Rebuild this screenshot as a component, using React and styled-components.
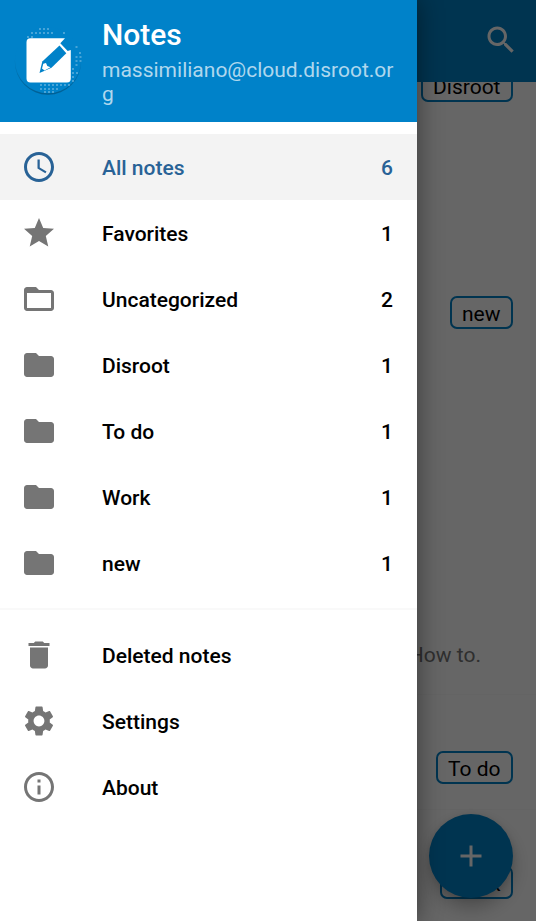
import React from "react";
import styled, { createGlobalStyle } from "styled-components";

const Global = createGlobalStyle`
  * { box-sizing: border-box; }
  body { margin: 0; font-family: Roboto, "Liberation Sans", sans-serif; overflow: hidden; }
`;

const Screen = styled.div`
  position: relative;
  width: 536px;
  height: 921px;
  overflow: hidden;
  background: #fff;
`;

const Page = styled.div`
  display: flex;
  flex-direction: column;
  height: 100%;
`;

const AppBar = styled.header`
  flex: none;
  display: flex;
  align-items: center;
  justify-content: flex-end;
  height: 82px;
  padding: 0 17px 3px 0;
  background: #0082c9;
`;

const NoteList = styled.main`
  flex: 1;
  min-height: 0;
  overflow: hidden;
  display: flex;
  flex-direction: column;
`;

const Note = styled.article`
  flex: none;
  display: flex;
  flex-direction: column;
  justify-content: flex-end;
  align-items: flex-end;
  height: ${(p) => p.$height}px;
  margin-top: ${(p) => p.$offset || 0}px;
  padding: 0 23px 25px;
  border-bottom: 1px solid ${(p) => (p.$plain ? "transparent" : "#f9f9f9")};
`;

const Category = styled.span`
  height: 33px;
  padding: 0 10.5px 0 10px;
  border: 2px solid #0082c9;
  border-radius: 7px;
  font-size: 21px;
  line-height: 32px;
  color: #000;
`;

const Excerpt = styled.p`
  margin: 0 32px 1px 0;
  font-size: 21px;
  line-height: 25px;
  color: #767676;
`;

const Fab = styled.div`
  position: absolute;
  right: 23px;
  bottom: 23px;
  width: 84px;
  height: 84px;
  border-radius: 50%;
  display: flex;
  align-items: center;
  justify-content: center;
  background: #0082c9;
  box-shadow: 0 10px 18px rgba(0, 0, 0, 0.26), 0 1px 6px rgba(0, 0, 0, 0.1);
`;

const Scrim = styled.div`
  position: absolute;
  inset: 0;
  background: rgba(0, 0, 0, 0.6);
`;

const Drawer = styled.nav`
  position: absolute;
  inset: 0 auto 0 0;
  width: 417px;
  background: #fff;
  box-shadow: 0 0 24px rgba(0, 0, 0, 0.45);
`;

const Account = styled.header`
  display: flex;
  height: 122px;
  padding: 18px 20px 0 12px;
  background: #0082c9;
`;

const AccountText = styled.div`
  width: 295px;
  margin-left: 18px;
`;

const Title = styled.h1`
  margin: -1px 0 0;
  font-size: 30px;
  font-weight: 500;
  line-height: 35px;
  color: #fff;
`;

const Email = styled.div`
  margin-top: 6px;
  font-size: 21px;
  line-height: 24px;
  color: rgba(255, 255, 255, 0.7);
  word-break: break-all;
`;

const Menu = styled.ul`
  margin: 0;
  padding: 12px 0;
  list-style: none;
`;

const FooterMenu = styled(Menu)`
  border-top: 2px solid #f9f9f9;
`;

const Item = styled.li`
  display: flex;
  align-items: center;
  height: 66px;
  padding: 0 24px 0 21px;
  background: ${(p) => (p.$active ? "#f3f3f3" : "transparent")};
  color: ${(p) => (p.$active ? "#286296" : "#000")};
  font-size: 21px;
  font-weight: 500;

  svg { color: ${(p) => (p.$active ? "#286296" : "#757575")}; }
`;

const Label = styled.span`
  flex: 1;
  margin-left: 45px;
  padding-top: 2px;
`;

const Count = styled.span`
  padding-top: 2px;
`;

const Glyph = styled.svg`
  flex: none;
  display: block;
  width: 36px;
  height: 36px;
  fill: currentColor;
`;

const LightGlyph = styled(Glyph)`
  color: #fff;
`;

const Logo = styled.svg`
  flex: none;
  width: 72px;
  height: 84px;
`;

const PATHS = {
  clock: "M11.99 2C6.47 2 2 6.48 2 12s4.47 10 9.99 10C17.52 22 22 17.52 22 12S17.52 2 11.99 2zM12 20c-4.42 0-8-3.58-8-8s3.58-8 8-8 8 3.58 8 8-3.58 8-8 8zm.5-13H11v6l5.25 3.15.75-1.23-4.5-2.67z",
  star: "M12 17.27L18.18 21l-1.64-7.03L22 9.24l-7.19-.61L12 2 9.19 8.63 2 9.24l5.46 4.73L5.82 21z",
  folderOpen: "M20 6h-8l-2-2H4c-1.1 0-2 .9-2 2v12c0 1.1.9 2 2 2h16c1.1 0 2-.9 2-2V8c0-1.1-.9-2-2-2zm0 12H4V8h16v10z",
  folder: "M10 4H4c-1.1 0-1.99.9-1.99 2L2 18c0 1.1.9 2 2 2h16c1.1 0 2-.9 2-2V8c0-1.1-.9-2-2-2h-8l-2-2z",
  trash: "M6 19c0 1.1.9 2 2 2h8c1.1 0 2-.9 2-2V7H6v12zM19 4h-3.5l-1-1h-5l-1 1H5v2h14V4z",
  gear: "M19.14 12.94c.04-.3.06-.61.06-.94 0-.32-.02-.64-.07-.94l2.03-1.58c.18-.14.23-.41.12-.61l-1.92-3.32c-.12-.22-.37-.29-.59-.22l-2.39.96c-.5-.38-1.03-.7-1.62-.94l-.36-2.54c-.04-.24-.24-.41-.48-.41h-3.84c-.24 0-.43.17-.47.41l-.36 2.54c-.59.24-1.13.57-1.62.94l-2.39-.96c-.22-.08-.47 0-.59.22L2.74 8.87c-.12.21-.08.47.12.61l2.03 1.58c-.05.3-.09.63-.09.94s.02.64.07.94l-2.03 1.58c-.18.14-.23.41-.12.61l1.92 3.32c.12.22.37.29.59.22l2.39-.96c.5.38 1.03.7 1.62.94l.36 2.54c.05.24.24.41.48.41h3.84c.24 0 .44-.17.47-.41l.36-2.54c.59-.24 1.13-.56 1.62-.94l2.39.96c.22.08.47 0 .59-.22l1.92-3.32c.12-.22.07-.47-.12-.61l-2.01-1.58zM12 15.6c-1.98 0-3.6-1.62-3.6-3.6s1.62-3.6 3.6-3.6 3.6 1.62 3.6 3.6-1.62 3.6-3.6 3.6z",
  info: "M11 17h2v-6h-2v6zm1-15C6.48 2 2 6.48 2 12s4.48 10 10 10 10-4.48 10-10S17.52 2 12 2zm0 18c-4.41 0-8-3.59-8-8s3.59-8 8-8 8 3.59 8 8-3.59 8-8 8zM11 9h2V7h-2v2z",
  search: "M15.5 14h-.79l-.28-.27C15.41 12.59 16 11.11 16 9.5 16 5.91 13.09 3 9.5 3S3 5.91 3 9.5 5.91 16 9.5 16c1.61 0 3.09-.59 4.23-1.57l.27.28v.79l5 4.99L20.49 19l-4.99-5zm-6 0C7.01 14 5 11.99 5 9.5S7.01 5 9.5 5 14 7.01 14 9.5 11.99 14 9.5 14z",
  plus: "M19 13h-6v6h-2v-6H5v-2h6V5h2v6h6v2z",
};

const Icon = ({ name, as: Base = Glyph }) => (
  <Base viewBox="0 0 24 24" aria-hidden="true">
    <path d={PATHS[name]} />
  </Base>
);

// Halftone dots around the logo: [row y, first x, number of dots]
const DOTS = [
  [29, 40, 3], [33, 32, 6], [33, 64, 1], [37, 28, 2],
  [47, 76.5, 1], [53, 80, 1], [57, 76.5, 2], [61, 76.5, 2], [65, 76.5, 1],
  [69, 73, 1], [73, 73, 2], [77, 73, 1], [81, 73, 1],
  [85, 41, 8], [89, 41, 5], [92, 45, 3],
];

const NotesLogo = () => (
  <Logo viewBox="12 18 72 84" aria-label="Notes">
    <defs>
      <linearGradient id="rim" x1="0" y1="0" x2="0" y2="1">
        <stop offset="0.4" stopColor="#00507c" stopOpacity="0" />
        <stop offset="1" stopColor="#00507c" stopOpacity="0.7" />
      </linearGradient>
    </defs>
    <circle cx="48" cy="61.5" r="33.3" fill="url(#rim)" />
    <circle cx="48" cy="60.3" r="33" fill="#0082c9" />
    {DOTS.flatMap(([y, x, n]) =>
      Array.from({ length: n }, (_, i) => (
        <rect key={`${y}-${x}-${i}`} x={x + i * 4 - 1} y={y - 1} width="2" height="2" fill="#fff" opacity="0.28" />
      ))
    )}
    <path fill="#fff" d="M30.500 38.200H65L60.300 43.300 67.700 51 70.800 50V78.500Q70.800 82.500 67 82.500H30.500Q26.500 82.500 26.500 78.500V42.200Q26.500 38.200 30.500 38.200Z" />
    <path fill="#0082c9" d="M39.500 73L42.300 61.500 59.500 45.500 66.300 53.300 51.500 67.800Z" />
    <path fill="#fff" d="M43.300 63.800L46 63 47.300 66 50.500 67.300 44.500 70.400 42 68.500Z" />
  </Logo>
);

const FOLDERS = [
  { icon: "clock", label: "All notes", count: 6, active: true },
  { icon: "star", label: "Favorites", count: 1 },
  { icon: "folderOpen", label: "Uncategorized", count: 2 },
  { icon: "folder", label: "Disroot", count: 1 },
  { icon: "folder", label: "To do", count: 1 },
  { icon: "folder", label: "Work", count: 1 },
  { icon: "folder", label: "new", count: 1 },
];

const ACTIONS = [
  { icon: "trash", label: "Deleted notes" },
  { icon: "gear", label: "Settings" },
  { icon: "info", label: "About" },
];

const MenuItem = ({ icon, label, count, active }) => (
  <Item $active={active}>
    <Icon name={icon} />
    <Label>{label}</Label>
    {count !== undefined && <Count>{count}</Count>}
  </Item>
);

export default function App() {
  return (
    <>
      <Global />
      <Screen>
        <Page>
          <AppBar>
            <Icon name="search" as={LightGlyph} />
          </AppBar>
          <NoteList>
            <Note $height={115} $offset={-69} $plain><Category>Disroot</Category></Note>
            <Note $height={227} $plain><Category>new</Category></Note>
            <Note $height={340}><Excerpt>How to.</Excerpt></Note>
            <Note $height={115}><Category>To do</Category></Note>
            <Note $height={115}><Category>Work</Category></Note>
          </NoteList>
        </Page>
        <Fab><Icon name="plus" as={LightGlyph} /></Fab>
        <Scrim />
        <Drawer>
          <Account>
            <NotesLogo />
            <AccountText>
              <Title>Notes</Title>
              <Email>massimiliano@cloud.disroot.org</Email>
            </AccountText>
          </Account>
          <Menu>{FOLDERS.map((f) => <MenuItem key={f.label} {...f} />)}</Menu>
          <FooterMenu>{ACTIONS.map((a) => <MenuItem key={a.label} {...a} />)}</FooterMenu>
        </Drawer>
      </Screen>
    </>
  );
}
